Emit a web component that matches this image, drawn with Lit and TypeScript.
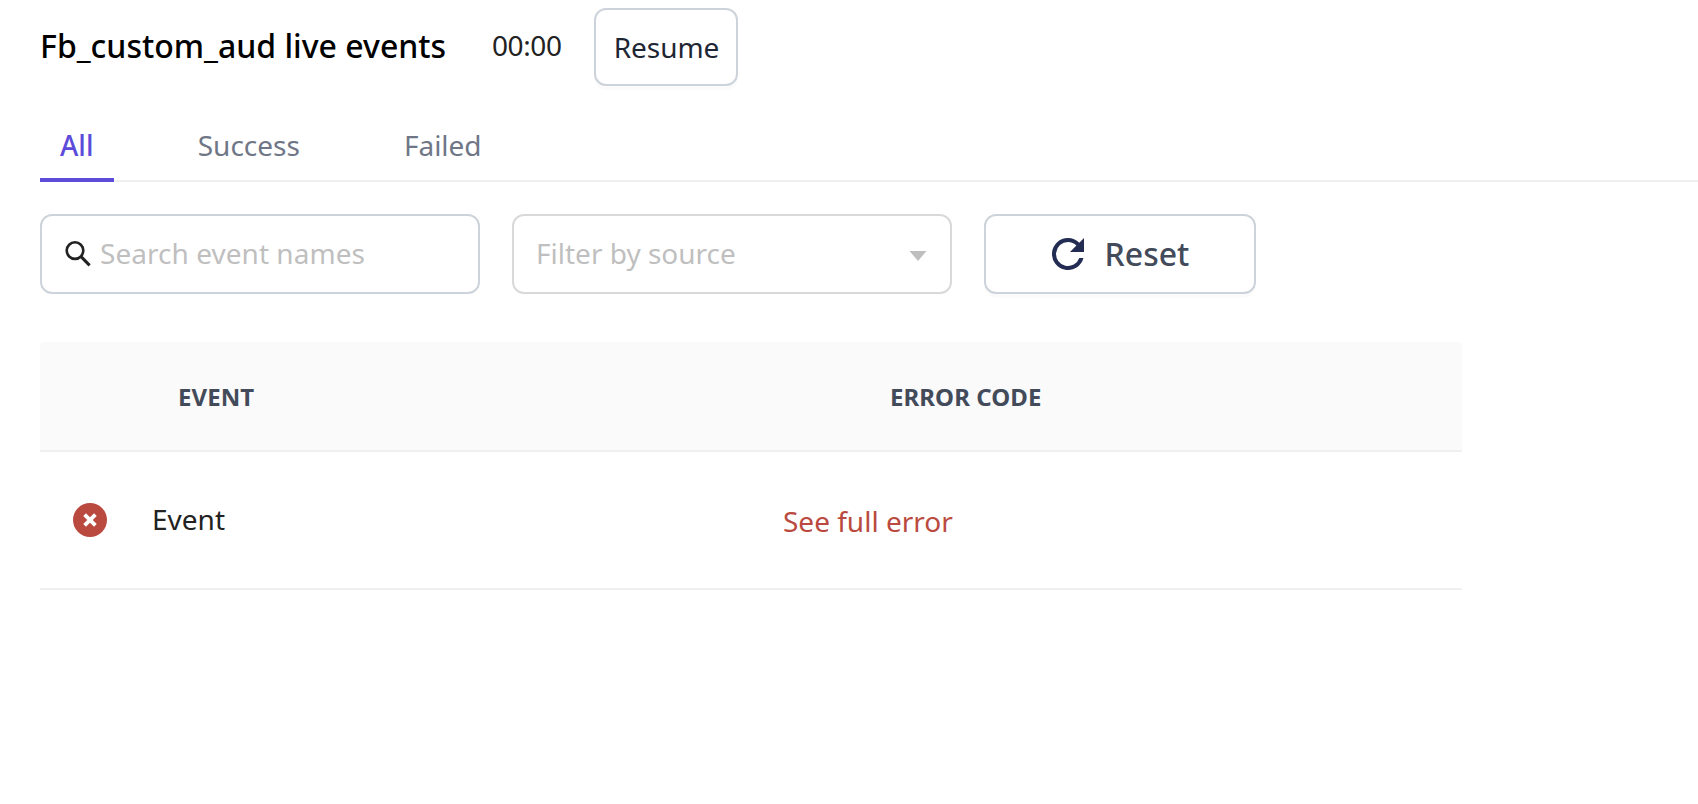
import { LitElement, html, css } from "lit";
import { customElement, state } from "lit/decorators.js";

interface EventRow {
  name: string;
  error: string;
}

@customElement("app-root")
export class AppRoot extends LitElement {
  static styles = css`
    :host {
      display: block;
      min-height: 804px;
      box-sizing: border-box;
      padding: 8px 0 0 40px;
      background: #fff;
      color: #222;
      font-family: "Noto Sans", sans-serif;
      font-size: 28px;
      line-height: 44px;
      overflow: hidden;
    }
    * {
      box-sizing: border-box;
    }
    button,
    input {
      font: inherit;
      color: inherit;
      margin: 0;
    }
    .header {
      display: flex;
      align-items: flex-start;
      height: 78px;
    }
    .title {
      margin: 0;
      padding-top: 16px;
      width: 452px;
      font-size: 32px;
      font-weight: 500;
      color: #000;
      white-space: nowrap;
    }
    .timer {
      padding-top: 15px;
      width: 102px;
      letter-spacing: -0.4px;
    }
    .btn {
      display: flex;
      align-items: center;
      justify-content: center;
      border: 2px solid #cdd3da;
      border-radius: 12px;
      background: #fff;
      box-shadow: 0 4px 0 rgba(0, 0, 0, 0.016);
      padding: 0;
    }
    .resume {
      width: 144px;
      height: 78px;
      padding-left: 1px;
      color: #1f2633;
      letter-spacing: -0.08px;
    }
    .tabs {
      display: flex;
      gap: 64px;
      height: 96px;
      padding-top: 36px;
      box-shadow: inset 0 -2px #f0f0f0;
    }
    .tab {
      height: 60px;
      padding: 1px 20px 0;
      border: 0;
      background: none;
      color: #6f7787;
      display: flex;
    }
    .tab.active {
      min-width: 74px;
      margin-right: -0.3px;
      color: #5c4cd9;
      font-weight: 500;
      border-bottom: 4px solid #5c4cd9;
    }
    .filters {
      display: flex;
      gap: 32px;
      margin-top: 32px;
      height: 80px;
    }
    .field {
      display: flex;
      align-items: center;
      width: 440px;
      height: 80px;
      border: 2px solid #cdd3da;
      border-radius: 12px;
      padding: 0 22px 2px;
      color: #bfbfbf;
    }
    .field svg {
      flex: none;
    }
    .input {
      border: 0;
      outline: 0;
      background: none;
      padding: 0;
      margin-left: 8px;
      flex: 1;
      min-width: 0;
      height: 44px;
      letter-spacing: 0.04px;
    }
    .input::placeholder {
      color: #bfbfbf;
      opacity: 1;
    }
    .select {
      border-color: #d9d9d9;
      justify-content: space-between;
    }
    .select svg {
      margin: 6px 1px 0 0;
    }
    .reset {
      width: 272px;
      height: 80px;
      gap: 21px;
      padding-left: 1px;
      font-size: 32px;
      font-weight: 500;
      color: #434b5a;
    }
    .table {
      width: 1422px;
      margin-top: 48px;
    }
    .row {
      display: grid;
      grid-template-columns: 112px 631px 1fr;
      align-items: center;
      height: 138px;
      border-bottom: 2px solid #f0f0f0;
    }
    .head {
      height: 110px;
      padding-top: 1px;
      background: #fafafa;
      border-radius: 4px 4px 0 0;
      font-size: 24px;
      font-weight: 700;
      color: #434b5a;
      letter-spacing: 0.06px;
    }
    .head .c-event {
      padding-left: 26px;
    }
    .head .c-error {
      padding-left: 107px;
    }
    .c-icon {
      display: flex;
      padding-left: 33px;
    }
    .c-name {
      padding-bottom: 2px;
    }
    .link {
      color: #ba4a40;
      padding-top: 1px;
    }
  `;

  @state() private active = "All";

  private tabs = ["All", "Success", "Failed"];
  private rows: EventRow[] = [{ name: "Event", error: "See full error" }];

  render() {
    return html`
      <header class="header">
        <h1 class="title">Fb_custom_aud live events</h1>
        <span class="timer">00:00</span>
        <button class="btn resume">Resume</button>
      </header>
      <nav class="tabs">
        ${this.tabs.map(
          (t) => html`<button
            class="tab ${t === this.active ? "active" : ""}"
            @click=${() => (this.active = t)}
          >${t}</button>`
        )}
      </nav>
      <section class="filters">
        <label class="field">
          <svg width="28" height="28" viewBox="0 0 28 28" fill="none" stroke="#222" stroke-width="2.6">
            <circle cx="11" cy="11.6" r="8.3" />
            <path d="M16.8 17.4L25.6 26.4" stroke-width="3" />
          </svg>
          <input class="input" placeholder="Search event names" />
        </label>
        <div class="field select">
          <span>Filter by source</span>
          <svg width="18" height="10" viewBox="0 0 18 10"><path d="M0.5 0H17.5L9 10z" fill="#bfbfbf" /></svg>
        </div>
        <button class="btn reset">
          <svg width="32" height="32" viewBox="4 4 16 16" fill="#232c52">
            <path d="M17.65 6.35A7.958 7.958 0 0 0 12 4a8 8 0 1 0 7.73 10h-2.08A5.99 5.99 0 1 1 12 6c1.66 0 3.14.69 4.22 1.78L13 11h7V4z" />
          </svg>
          <span>Reset</span>
        </button>
      </section>
      <section class="table">
        <div class="row head">
          <span></span>
          <span class="c-event">EVENT</span>
          <span class="c-error">ERROR CODE</span>
        </div>
        ${this.rows.map(
          (r) => html`<div class="row">
            <span class="c-icon">
              <svg width="34" height="34" viewBox="0 0 34 34">
                <circle cx="17" cy="17" r="17" fill="#ba4a40" />
                <path d="M11.6 11.6L22.4 22.4M22.4 11.6L11.6 22.4" stroke="#fff" stroke-width="3.8" />
              </svg>
            </span>
            <span class="c-name">${r.name}</span>
            <span class="link">${r.error}</span>
          </div>`
        )}
      </section>
    `;
  }
}
